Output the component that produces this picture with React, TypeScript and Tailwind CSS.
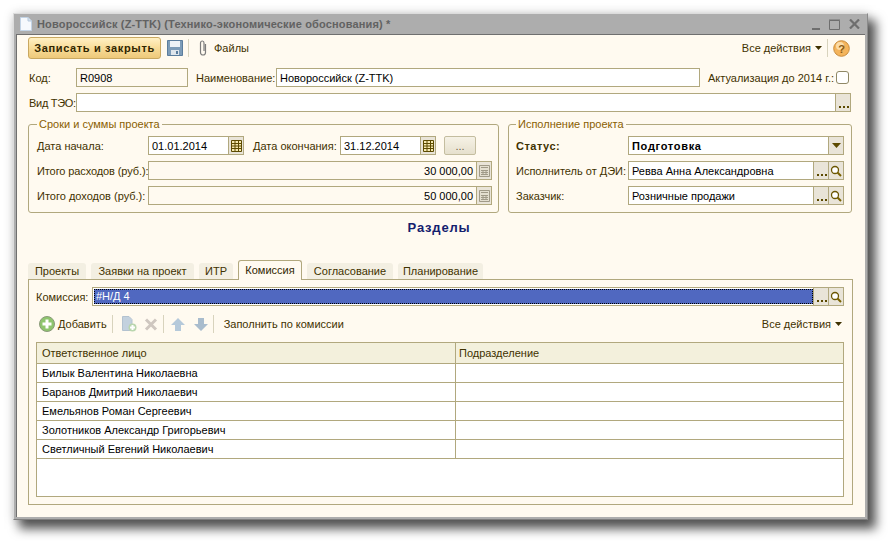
import type { ReactNode } from "react";

const people = [
  "Билык Валентина Николаевна",
  "Баранов Дмитрий Николаевич",
  "Емельянов Роман Сергеевич",
  "Золотников Александр Григорьевич",
  "Светличный Евгений Николаевич",
];

const tabs = [
  { name: "Проекты", w: "w-[58px]" },
  { name: "Заявки на проект", w: "w-[103px]" },
  { name: "ИТР", w: "w-[34px]" },
  { name: "Комиссия", w: "w-[64px]", active: true },
  { name: "Согласование", w: "w-[86px]" },
  { name: "Планирование", w: "w-[85px]" },
];

function CalendarIcon() {
  return (
    <svg width="11" height="12" viewBox="0 0 11 12">
      <path d="M0.5 0.5H10.5V11.5H0.5Z" fill="#f6e9b0" stroke="#5c4a00" />
      <path d="M0 3.5H11M0 6H11M0 8.5H11M4 1V11M7.5 1V11" stroke="#5c4a00" />
    </svg>
  );
}

function CalcIcon() {
  return (
    <svg width="11" height="12" viewBox="0 0 11 12">
      <path d="M0.5 0.5H10.5V11.5H0.5Z" fill="#e4dfd0" stroke="#a09a88" />
      <path d="M2 2.5H9M2 5.5H9M2 7.5H9M2 9.5H9M4 5V10M7 5V10" stroke="#a09a88" />
    </svg>
  );
}

function SearchIcon() {
  return (
    <svg width="12" height="12" viewBox="0 0 12 12" fill="none">
      <circle cx="5" cy="5" r="3.5" stroke="#6b5600" strokeWidth="1.3" fill="#fff" />
      <path d="M7.5 7.5L11 11" stroke="#7a6200" strokeWidth="2" />
    </svg>
  );
}

function FieldButton({ children }: { children: ReactNode }) {
  return (
    <div className="flex h-full w-[15px] shrink-0 items-center justify-center border-l border-[#b1a87e] bg-[#e9e4d8]">
      {children}
    </div>
  );
}

function Dots() {
  return (
    <svg width="11" height="12" viewBox="0 0 11 12">
      <path d="M1 9H3V11H1ZM5 9H7V11H5ZM9 9H11V11H9Z" fill="#5c4a00" />
    </svg>
  );
}

function Field({
  w,
  value,
  className = "",
  children,
  bold,
  right,
}: {
  w: string;
  value?: string;
  className?: string;
  children?: ReactNode;
  bold?: boolean;
  right?: boolean;
}) {
  return (
    <div className={`flex h-[19px] shrink-0 items-center border border-[#b1a87e] bg-white ${w} ${className}`}>
      <div
        className={`min-w-0 flex-1 px-[3px] whitespace-nowrap text-black ${bold ? "font-bold tracking-[0.7px]" : ""} ${right ? "text-right" : ""}`}
      >
        {value}
      </div>
      {children}
    </div>
  );
}

function Sep() {
  return <div className="mx-[5px] h-[18px] w-px bg-[#d8d3bd]" />;
}

function Caret() {
  return (
    <svg width="7" height="4" viewBox="0 0 7 4" className="ml-[4px]">
      <path d="M0 0H7L3.5 4Z" fill="#3d3000" />
    </svg>
  );
}

function Group({ title, className, children }: { title: string; className: string; children: ReactNode }) {
  return (
    <fieldset className={`rounded-[3px] border border-[#b1a87e] ${className}`}>
      <legend className="ml-[7px] h-[14px] px-[2px] leading-[14px] text-[#8a5e00]">{title}</legend>
      <div className="flex flex-col gap-[6px] pt-[5px] pb-[7px] pl-[7px]">{children}</div>
    </fieldset>
  );
}

export default function App() {
  return (
    <div className="h-[541px] w-[888px] overflow-hidden bg-white pt-[13px] pl-[13px] font-['Liberation_Sans',sans-serif] text-[11px] leading-[14px] whitespace-nowrap text-[#3f3200]">
      <div className="flex h-[507px] w-[855px] flex-col border-t border-r border-b border-l border-t-[#dcdcdc] border-r-[#8a8a8a] border-b-[#808080] border-l-[#dcdcdc] bg-[#adadad] px-[2px] pb-[2px] shadow-[7px_8px_10px_1px_rgba(0,0,0,0.65),0_0_10px_rgba(0,0,0,0.15)]">
        {/* title bar */}
        <div className="flex h-[20px] shrink-0 items-center pl-[4px]">
          <svg width="12" height="14" viewBox="0 0 12 14">
            <path d="M0.5 0.5H8L11.5 4V13.5H0.5Z" fill="#f6f9fd" stroke="#c3d4e6" />
            <path d="M8 0.5V4H11.5" fill="#d5e2ef" stroke="#b6c9dd" />
          </svg>
          <span className="ml-[5px] text-[11px] font-bold tracking-[0.16px] text-[#626262]">
            Новороссийск (Z-TTK) (Технико-экономические обоснования) *
          </span>
          <div className="ml-auto flex items-center gap-[9px] pr-[5px]">
            <svg width="8" height="12" viewBox="0 0 8 12">
              <path d="M0 10H8V12H0Z" fill="#6e6e6e" />
            </svg>
            <svg width="11" height="11" viewBox="0 0 11 11" fill="none">
              <path d="M0.5 1.5H10.5V10.5H0.5Z" stroke="#6e6e6e" />
              <path d="M0 1H11" stroke="#6e6e6e" />
            </svg>
            <svg width="11" height="10" viewBox="0 0 11 10" fill="none">
              <path d="M1 0.5L10 9.5M10 0.5L1 9.5" stroke="#6e6e6e" strokeWidth="2.2" />
            </svg>
          </div>
        </div>

        <div className="flex min-h-0 flex-1 flex-col border-t border-l border-[#6f6f6f] bg-[#fffaf0] pr-[12px] pl-[11px]">
          {/* command bar */}
          <div className="mt-[1px] flex h-[24px] shrink-0 items-center">
            <button className="h-[22px] w-[133px] rounded-[3px] border border-[#c9a860] bg-gradient-to-b from-[#fff0c4] via-[#f8dc98] to-[#eec97a] font-bold tracking-[0.65px] text-[#2f2500]">
              Записать и закрыть
            </button>
            <svg width="16" height="16" viewBox="0 0 16 16" className="ml-[6px]">
              <path d="M0.5 0.5H15.5V15.5H0.5Z" fill="#7d9cb8" stroke="#5b7d9d" />
              <path d="M3 1H13V7H3Z" fill="#eef3f7" />
              <path d="M4 10H12V15H4Z" fill="#dfe6ec" />
              <path d="M9 11H11V14H9Z" fill="#5b7d9d" />
            </svg>
            <Sep />
            <svg width="8" height="16" viewBox="0 0 8 16" fill="none" className="ml-[5px]">
              <path
                d="M6.5 4V12.5C6.5 14 5.4 15 4 15C2.6 15 1.5 14 1.5 12.5V3C1.5 1.8 2.3 1 3.4 1C4.5 1 5 1.8 5 3V11"
                stroke="#7c7c7c"
                strokeWidth="1.2"
              />
            </svg>
            <span className="ml-[7px]">Файлы</span>
            <div className="ml-auto flex items-center">
              <span>Все действия</span>
              <Caret />
              <Sep />
              <svg width="17" height="17" viewBox="0 0 17 17" className="mr-[3px]">
                <circle cx="8.5" cy="8.5" r="7.8" fill="#f4b45c" stroke="#c98c3c" />
                <circle cx="7" cy="6" r="4" fill="#fbdca8" />
                <text x="8.5" y="12.5" textAnchor="middle" fontSize="11" fontWeight="700" fill="#8a5a14" fontFamily="Liberation Sans">
                  ?
                </text>
              </svg>
            </div>
          </div>

          {/* header fields */}
          <div className="mt-[8px] flex h-[19px] shrink-0 items-center">
            <span className="w-[48px] pl-[1px]">Код:</span>
            <Field w="w-[112px]" value="R0908" className="!bg-[#fffaf0]" />
            <span className="ml-[8px] w-[80px]">Наименование:</span>
            <Field w="w-[424px]" value="Новороссийск (Z-TTK)" />
            <span className="ml-[8px] w-[128px]">Актуализация до 2014 г.:</span>
            <div className="h-[13px] w-[13px] rounded-[3px] border border-[#8f8866] bg-white" />
          </div>
          <div className="mt-[6px] flex h-[19px] shrink-0 items-center">
            <span className="w-[48px] pl-[1px] tracking-[-0.3px]">Вид ТЭО:</span>
            <Field w="w-[775px]">
              <FieldButton>
                <Dots />
              </FieldButton>
            </Field>
          </div>

          {/* groups */}
          <div className="mt-[5px] flex shrink-0 gap-[9px]">
            <Group title="Сроки и суммы проекта" className="w-[471px] pl-[1px]">
              <div className="flex h-[19px] items-center">
                <span className="w-[111px]">Дата начала:</span>
                <Field w="w-[96px]" value="01.01.2014">
                  <FieldButton>
                    <CalendarIcon />
                  </FieldButton>
                </Field>
                <span className="ml-[9px] w-[87px]">Дата окончания:</span>
                <Field w="w-[96px]" value="31.12.2014">
                  <FieldButton>
                    <CalendarIcon />
                  </FieldButton>
                </Field>
                <button className="ml-[8px] h-[19px] w-[32px] rounded-[2px] border border-[#c4bd9f] bg-gradient-to-b from-[#f6f2e6] to-[#e6e0cd] text-[#6b6044]">
                  ...
                </button>
              </div>
              <div className="flex h-[19px] items-center">
                <span className="w-[111px] tracking-[-0.1px]">Итого расходов (руб.):</span>
                <Field w="w-[344px]" value="30 000,00" right className="!bg-[#fffaf0]">
                  <FieldButton>
                    <CalcIcon />
                  </FieldButton>
                </Field>
              </div>
              <div className="flex h-[19px] items-center">
                <span className="w-[111px]">Итого доходов (руб.):</span>
                <Field w="w-[344px]" value="50 000,00" right className="!bg-[#fffaf0]">
                  <FieldButton>
                    <CalcIcon />
                  </FieldButton>
                </Field>
              </div>
            </Group>

            <Group title="Исполнение проекта" className="w-[344px]">
              <div className="flex h-[19px] items-center">
                <span className="w-[112px] font-bold tracking-[0.5px]">Статус:</span>
                <Field w="w-[216px]" value="Подготовка" bold>
                  <FieldButton>
                    <svg width="9" height="5" viewBox="0 0 9 5">
                      <path d="M0 0H9L4.5 5Z" fill="#5c4a00" />
                    </svg>
                  </FieldButton>
                </Field>
              </div>
              <div className="flex h-[19px] items-center">
                <span className="w-[112px]">Исполнитель от ДЭИ:</span>
                <Field w="w-[216px]" value="Ревва Анна Александровна">
                  <FieldButton>
                    <Dots />
                  </FieldButton>
                  <FieldButton>
                    <SearchIcon />
                  </FieldButton>
                </Field>
              </div>
              <div className="flex h-[19px] items-center">
                <span className="w-[112px]">Заказчик:</span>
                <Field w="w-[216px]" value="Розничные продажи">
                  <FieldButton>
                    <Dots />
                  </FieldButton>
                  <FieldButton>
                    <SearchIcon />
                  </FieldButton>
                </Field>
              </div>
            </Group>
          </div>

          <div className="mt-[7px] h-[16px] shrink-0 pr-[3px] text-center text-[13px] leading-[16px] font-bold tracking-[0.8px] text-[#14206e]">
            Разделы
          </div>

          {/* tabs */}
          <div className="mt-[24px] flex h-[19px] shrink-0 items-end gap-[5px]">
            {tabs.map((tab) => (
              <div
                key={tab.name}
                className={
                  tab.active
                    ? `relative z-10 -mb-px h-[20px] ${tab.w} rounded-t-[3px] border border-b-0 border-[#b1a87e] bg-[#fffaf0] pt-[2px] text-center text-[#2f2500]`
                    : `h-[16px] ${tab.w} rounded-t-[3px] bg-[#f3efe2] pt-[1px] text-center`
                }
              >
                {tab.name}
              </div>
            ))}
          </div>

          {/* panel */}
          <div className="flex h-[226px] shrink-0 flex-col border border-[#b1a87e] px-[7px] pt-[7px]">
            <div className="flex h-[19px] shrink-0 items-center">
              <span className="w-[56px]">Комиссия:</span>
              <div className="flex h-[19px] w-[752px] items-center border border-[#b1a87e] bg-white">
                <div className="ml-[1px] h-[15px] flex-1 border border-dotted border-black bg-[#5068c0] px-[1px] leading-[13px] text-white">
                  #Н/Д 4
                </div>
                <FieldButton>
                  <Dots />
                </FieldButton>
                <FieldButton>
                  <SearchIcon />
                </FieldButton>
              </div>
            </div>

            <div className="mt-[9px] flex h-[18px] shrink-0 items-center pl-[3px]">
              <svg width="16" height="16" viewBox="0 0 16 16">
                <circle cx="8" cy="8" r="7.5" fill="#8fc56e" stroke="#8a9a7a" />
                <path d="M6.5 3.5H9.5V6.5H12.5V9.5H9.5V12.5H6.5V9.5H3.5V6.5H6.5Z" fill="#fff" />
              </svg>
              <span className="ml-[3px]">Добавить</span>
              <Sep />
              <svg width="16" height="16" viewBox="0 0 16 16" className="ml-[3px]">
                <path d="M1.5 0.5H8L11 3.5V14.5H1.5Z" fill="#c3d1de" stroke="#b3c2d0" />
                <circle cx="11.5" cy="11.5" r="4" fill="#b9d6ae" />
                <path d="M10.5 9H12.5V10.5H14V12.5H12.5V14H10.5V12.5H9V10.5H10.5Z" fill="#fff" />
              </svg>
              <svg width="14" height="13" viewBox="0 0 14 13" className="ml-[7px]">
                <path d="M2 1.5L12 11.5M12 1.5L2 11.5" stroke="#cfc7c0" strokeWidth="3" />
              </svg>
              <Sep />
              <svg width="14" height="13" viewBox="0 0 14 13" className="ml-[2px]">
                <path d="M7 0L14 7H10V13H4V7H0Z" fill="#b5c9da" />
              </svg>
              <svg width="14" height="13" viewBox="0 0 14 13" className="ml-[9px]">
                <path d="M7 13L14 6H10V0H4V6H0Z" fill="#a9bccd" />
              </svg>
              <Sep />
              <span className="ml-[5px]">Заполнить по комиссии</span>
              <div className="ml-auto flex items-center pr-[3px]">
                <span>Все действия</span>
                <Caret />
              </div>
            </div>

            <div className="mt-[9px] h-[155px] w-[808px] shrink-0 border border-[#b1a87e] bg-white">
              <div className="flex h-[21px] items-center border-b border-[#b1a87e] bg-[#f3f0dc]">
                <div className="h-full w-[419px] border-r border-[#b1a87e] pl-[5px] leading-[20px]">Ответственное лицо</div>
                <div className="pl-[3px]">Подразделение</div>
              </div>
              {people.map((name) => (
                <div key={name} className="flex h-[19px] items-center border-b border-[#b1a87e] text-black">
                  <div className="h-full w-[419px] border-r border-[#b1a87e] pl-[5px] leading-[18px]">{name}</div>
                  <div className="flex-1" />
                </div>
              ))}
            </div>
          </div>
        </div>
      </div>
    </div>
  );
}
